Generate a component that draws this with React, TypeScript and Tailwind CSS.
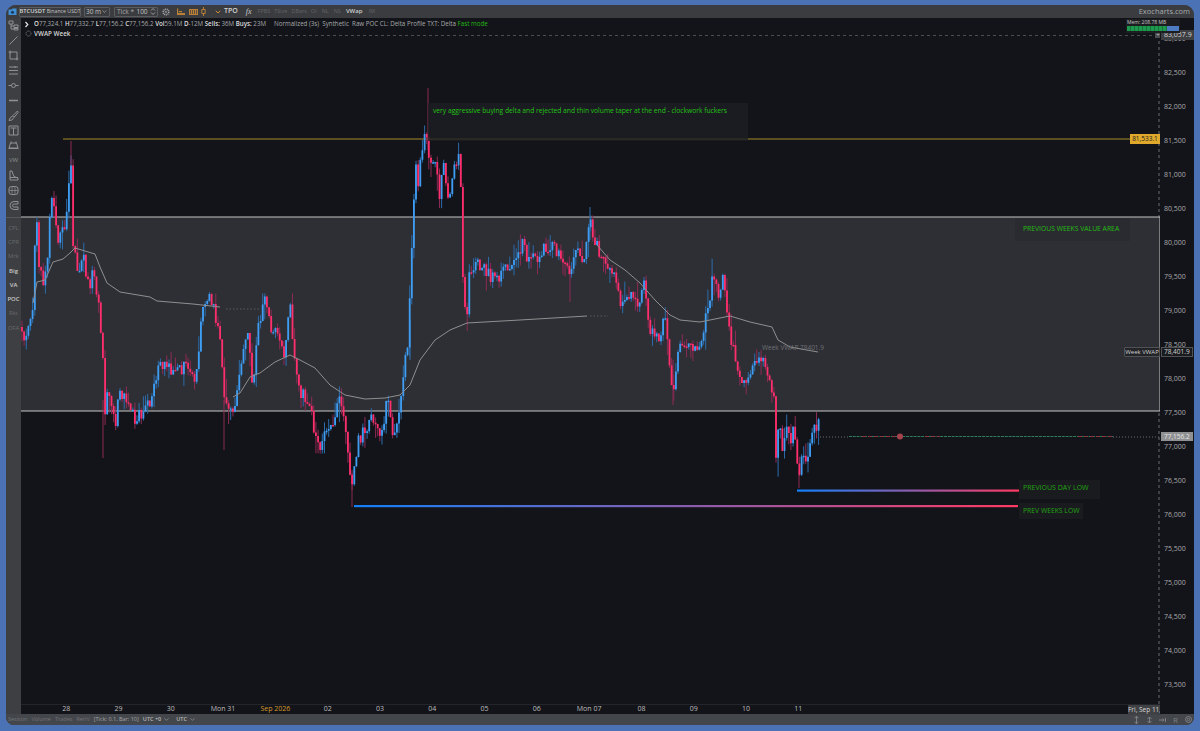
import type { ReactNode } from 'react';
import { ChevronDown } from 'lucide-react';

// price path read off the chart, in page pixels
const PATH: [number, number][] = [
  [21, 327], [24, 340], [28, 333], [33, 303], [36, 212], [39, 262], [43, 290], [47, 270], [50, 207], [53, 200], [58, 243],
  [65, 227], [71, 167], [73, 243], [78, 270], [83, 257], [90, 290], [93, 267], [100, 317], [103, 363], [105, 413], [108, 387],
  [115, 425], [120, 390], [135, 420], [150, 403], [153, 383], [162, 363], [175, 377], [187, 363], [193, 382], [198, 367],
  [200, 327], [208, 292], [217, 320], [222, 357], [224, 403], [232, 417], [240, 373], [247, 330], [253, 390], [258, 330],
  [265, 298], [272, 335], [278, 330], [284, 355], [290, 300], [295, 370], [300, 390], [310, 400], [315, 440], [320, 445],
  [330, 430], [340, 400], [345, 430], [352, 490], [358, 440], [365, 430], [372, 420], [380, 440], [388, 395], [393, 440],
  [400, 400], [408, 337], [413, 213], [417, 155], [418, 183], [425, 125], [430, 167], [435, 160], [440, 197], [443, 160],
  [449, 200], [458, 152], [460, 157], [462, 220], [463, 290], [467, 320], [468, 277], [475, 262], [483, 270], [497, 280],
  [503, 265], [513, 270], [522, 243], [530, 263], [540, 253], [545, 245], [555, 250], [562, 260], [570, 275], [575, 255],
  [585, 255], [590, 222], [600, 255], [605, 260], [612, 270], [620, 300], [628, 290], [635, 305], [645, 285], [650, 330],
  [658, 340], [665, 320], [673, 395], [680, 340], [690, 350], [700, 345], [708, 310], [713, 270], [718, 300], [723, 280],
  [728, 320], [735, 360], [745, 385], [755, 360], [762, 355], [770, 385], [775, 405], [776, 457], [779, 423], [783, 450],
  [786, 428], [790, 443], [793, 432], [798, 463], [799, 480], [803, 453], [808, 463], [810, 438], [815, 430], [818, 420], [820, 436],
];

const VWAP_LINES = [
  'M33 303L37 282L45 280L53 262L63 259L70 253L75 248L85 251L95 254L100 267L107 283L120 292L150 297L157 301L193 304L220 307',
  'M233 397L240 393L250 377L260 373L275 362L290 355L300 360L315 368L330 385L345 395L365 399L385 398L400 395L410 385L420 360L435 340L450 330L467 323L520 320L587 316',
  'M597 245L610 260L625 270L640 283L655 300L670 315L680 320L700 322L730 316L750 322L772 327L778 340L790 347L818 352',
];

// long wicks that noise would not produce: x, top, bottom, up candle or not
const WICKS: [number, number, number, boolean][] = [
  [428, 88, 150, false], [71, 141, 175, false], [103, 458, 400, false], [224, 450, 400, false], [352, 507, 470, false],
  [590, 207, 240, true], [673, 405, 360, false], [570, 302, 270, false], [410, 360, 320, true], [799, 488, 470, false],
];

function rng(seed: number) {
  return () => {
    seed = (seed + 0x6d2b79f5) | 0;
    let t = Math.imul(seed ^ (seed >>> 15), 1 | seed);
    t = (t + Math.imul(t ^ (t >>> 7), 61 | t)) ^ t;
    return ((t ^ (t >>> 14)) >>> 0) / 4294967296;
  };
}

function priceAt(x: number) {
  for (let i = 1; i < PATH.length; i++) {
    if (x <= PATH[i][0]) {
      const [x0, y0] = PATH[i - 1];
      const [x1, y1] = PATH[i];
      return y0 + ((y1 - y0) * (x - x0)) / (x1 - x0);
    }
  }
  return PATH[PATH.length - 1][1];
}

function buildCandles() {
  const rand = rng(11);
  let upBody = '';
  let downBody = '';
  let upWick = '';
  let downWick = '';
  let prev = priceAt(21);
  for (let x = 22; x < 820.5; x += 2.13) {
    const close = priceAt(x) + (rand() - 0.5) * 14;
    const top = Math.min(prev, close);
    const bottom = Math.max(prev, close);
    const up = close < prev;
    const hi = top - rand() * rand() * 20;
    const lo = bottom + rand() * rand() * 20;
    const body = `M${x.toFixed(1)} ${top.toFixed(1)}V${Math.max(bottom, top + 1.5).toFixed(1)}`;
    const wick = `M${x.toFixed(1)} ${hi.toFixed(1)}V${lo.toFixed(1)}`;
    if (up) {
      upBody += body;
      upWick += wick;
    } else {
      downBody += body;
      downWick += wick;
    }
    prev = close;
  }
  for (const [x, a, b, up] of WICKS) {
    if (up) upWick += `M${x} ${a}V${b}`;
    else downWick += `M${x} ${a}V${b}`;
  }
  return { upBody, downBody, upWick, downWick };
}

const candles = buildCandles();

const PRICES = [
  '83,000', '82,500', '82,000', '81,500', '81,000', '80,500', '80,000', '79,500', '79,000', '78,500',
  '78,000', '77,500', '77,000', '76,500', '76,000', '75,500', '75,000', '74,500', '74,000', '73,500',
];
const DAYS = ['28', '29', '30', 'Mon 31', 'Sep 2026', '02', '03', '04', '05', '06', 'Mon 07', '08', '09', '10', '11'];

function ToolIcon({ children }: { children: ReactNode }) {
  return (
    <div className="flex h-[15px] w-full items-center justify-center">
      <svg width="11" height="11" viewBox="0 0 11 11" fill="none" stroke="#8f9194" strokeWidth="1">
        {children}
      </svg>
    </div>
  );
}

function ToolLabel({ text, bright }: { text: string; bright?: boolean }) {
  return (
    <div className={bright ? 'flex h-[14.3px] items-center justify-center text-[6px] font-semibold text-[#c9c9c9]' : 'flex h-[14.3px] items-center justify-center text-[6px] text-[#67696c]'}>
      {text}
    </div>
  );
}

function LeftToolbar() {
  return (
    <div className="flex w-[15px] shrink-0 flex-col bg-[#3d3f42]">
      <ToolIcon><path d="M1 1h4v3H1zM6 5h4v2.500H6zM6 8.500h4V10H6zM3 4v5h3M3 6h3" /></ToolIcon>
      <ToolIcon><path d="M1.500 9.500l8-8" /></ToolIcon>
      <ToolIcon><path d="M2 2h7v7H2z" /><path d="M0.500 2h3M2 0.500v3M7.500 9h3M9 7.500v3" strokeWidth="0.8" /></ToolIcon>
      <ToolIcon><path d="M1 2h9M1 5.500h9M1 9h9" /><path d="M7 1v2" /></ToolIcon>
      <ToolIcon><path d="M0.500 5.500h3M7.500 5.500h3" /><circle cx="5.500" cy="5.500" r="2" /></ToolIcon>
      <ToolIcon><path d="M1 5.500h9" strokeWidth="1.300" /></ToolIcon>
      <ToolIcon><path d="M9.500 1L5 5.500 6.500 7 10 2.500zM4.500 6L2 8l-1 2.500 3-.5 2-2.500z" /></ToolIcon>
      <ToolIcon><path d="M1 1h9v9H1zM2.500 3h6M5.500 3v7" /></ToolIcon>
      <ToolIcon><path d="M2.500 3h6l1.500 5H1zM0.500 8.500h10M3 1.500v2M8 1.500v2" /></ToolIcon>
      <div className="flex h-[15px] items-center justify-center text-[6px] text-[#8f9194]">VW</div>
      <ToolIcon><path d="M2 1v9h8V8L6 6.500 5 4 4 1zM2 7.500h8" /></ToolIcon>
      <ToolIcon><rect x="1" y="1.500" width="9" height="8" rx="2.500" /><path d="M1 5.500h9M4 1.500v8M7 1.500v8" strokeWidth="0.7" /></ToolIcon>
      <ToolIcon><path d="M10 1.500H6a4 4 0 0 0 0 8h4V7H6a1.500 1.500 0 0 1 0-3h4z" /></ToolIcon>
      <div className="mt-[4px] h-px bg-[#55575a]" />
      <div className="flex flex-col pt-[3px]">
        <ToolLabel text="CPL" />
        <ToolLabel text="CPR" />
        <ToolLabel text="Mrk" />
        <ToolLabel text="Big" bright />
        <ToolLabel text="VA" bright />
        <ToolLabel text="POC" bright />
        <ToolLabel text="Rkt" />
        <ToolLabel text="OFA" />
      </div>
    </div>
  );
}

function TopBar() {
  return (
    <div className="flex h-[13px] shrink-0 items-center bg-[#3a3c3f] text-[7px] text-[#c4c4c4]">
      <svg className="ml-[2px] shrink-0" width="9" height="9" viewBox="0 0 9 9">
        <path d="M0.500 2.500h3l1-1h4v6.500h-8z" fill="#3f8fd6" />
        <circle cx="4.500" cy="5.200" r="1.500" fill="#1c3b5c" />
      </svg>
      <div className="ml-[2px] flex h-[10px] w-[62px] items-center justify-center overflow-hidden whitespace-nowrap rounded-[1px] border border-[#5a5c5f] text-[5.800px]">
        <span className="font-semibold text-[#d6d6d6]">BTCUSDT</span>
        <span className="ml-[1.500px] text-[5.200px]">Binance USDT</span>
      </div>
      <div className="ml-[3px] flex h-[10px] w-[26px] items-center justify-between whitespace-nowrap rounded-[1px] border border-[#5a5c5f] px-[1px] text-[6.500px]">
        <span>30 m</span>
        <ChevronDown size={7} />
      </div>
      <div className="ml-[4px] flex h-[10px] w-[44px] items-center justify-between whitespace-nowrap rounded-[1px] border border-[#5a5c5f] pl-[2px] pr-[1px] text-[6.500px]">
        <span className="text-[#a9a9a9]">Tick *</span>
        <span>100</span>
        <svg width="6" height="9" viewBox="0 0 6 9" fill="none" stroke="#b4b4b4" strokeWidth="0.8">
          <path d="M1 3.500L3 1.500 5 3.500M1 5.500L3 7.500 5 5.500" />
        </svg>
      </div>
      <svg className="ml-[4px] shrink-0" width="8" height="8" viewBox="0 0 8 8" fill="none" stroke="#a5a7aa">
        <circle cx="4" cy="4" r="2.800" strokeWidth="1.600" strokeDasharray="1 0.700" />
        <circle cx="4" cy="4" r="0.800" strokeWidth="0.700" />
      </svg>
      <svg className="ml-[6px] shrink-0" width="9" height="8" viewBox="0 0 9 8" fill="#b97f35">
        <path d="M1 0.500h1.200V5H9v2H1zM3 3h3v1.300H3z" />
      </svg>
      <svg className="ml-[4px] shrink-0" width="9" height="6" viewBox="0 0 9 6">
        <path d="M0 0h9v6H0z" fill="#b97f35" />
        <path d="M1.500 1v4M3.500 1v4M5.500 1v4M7.500 1v4" stroke="#3a3c3f" strokeWidth="0.700" />
      </svg>
      <svg className="ml-[3px] shrink-0" width="5" height="9" viewBox="0 0 5 9" fill="none" stroke="#b97f35">
        <path d="M0.800 2.500h3.400v4H0.800zM2.500 0v2.500M2.500 6.500V9" />
      </svg>
      <ChevronDown className="ml-[8px] shrink-0 text-[#d68a2e]" size={8} strokeWidth={3} />
      <span className="ml-[2px] font-semibold text-[#d2d2d2]">TPO</span>
      <span className="ml-[8px] font-['Liberation_Serif',serif] text-[8px] italic text-[#c9c9c9]">fx</span>
      <span className="ml-[6px] text-[5.500px] text-[#626467]">FPBS</span>
      <span className="ml-[4px] text-[5.500px] text-[#626467]">TSize</span>
      <span className="ml-[4px] text-[5.500px] text-[#626467]">DBars</span>
      <span className="ml-[4px] text-[5.500px] text-[#626467]">OI</span>
      <span className="ml-[5px] text-[5.500px] text-[#626467]">NL</span>
      <span className="ml-[5px] text-[5.500px] text-[#626467]">NS</span>
      <span className="ml-[5px] text-[6px] font-semibold text-[#cdcdcd]">VWap</span>
      <span className="ml-[6px] text-[5.500px] text-[#626467]">IM</span>
      <span className="ml-auto mr-[4px] text-[7.500px] text-[#a9abae]">Exocharts.com</span>
    </div>
  );
}

function ChartDrawing() {
  return (
    <svg className="absolute inset-0" width="1139" height="686" viewBox="21 18 1139 686" fill="none">
      <defs>
        <linearGradient id="low-line" x1="0" y1="0" x2="1" y2="0">
          <stop offset="0" stopColor="#1280fa" />
          <stop offset="1" stopColor="#ff3a62" />
        </linearGradient>
      </defs>
      <path d="M75 35.500H1155" stroke="#4b4d50" strokeDasharray="3 3" />
      <path d="M1159 35V704" stroke="#4c4e51" strokeWidth="1.500" strokeDasharray="3 3" />
      <rect x="21" y="217" width="1139" height="194" fill="#2e2f34" />
      <path d="M21 217H1160V411H21" stroke="#c6c6c6" />
      <path d="M63 139H1130" stroke="#a58a2c" />
      <path d="M226 309H260M590 316H608" stroke="#5b5c60" strokeDasharray="1.500 2" />
      <path d={candles.upWick} stroke="#2a6cab" />
      <path d={candles.downWick} stroke="#8c2a55" />
      <path d={candles.upBody} stroke="#3f9ef4" strokeWidth="1.800" />
      <path d={candles.downBody} stroke="#ff2e6c" strokeWidth="1.800" />
      {VWAP_LINES.map((d) => (
        <path key={d} d={d} stroke="#8f8f92" strokeLinejoin="round" />
      ))}
      <rect x="797" y="489.500" width="222" height="2.200" fill="url(#low-line)" />
      <rect x="354" y="505" width="664" height="2.200" fill="url(#low-line)" />
      <path d="M820 437H849M1113 437H1159" stroke="#6a6b6f" strokeDasharray="1 2" />
      <path d="M849 436.500H1113" stroke="#2f7d58" strokeWidth="1.200" strokeDasharray="3 0.800" />
      <path d="M862 436.500H898M925 436.500H940M1078 436.500H1113" stroke="#8e3640" strokeWidth="1.200" strokeDasharray="4 2" />
      <circle cx="900" cy="436.500" r="3" fill="#a5424c" />
    </svg>
  );
}

function ChartOverlays() {
  return (
    <>
      <div className="absolute left-[13px] top-[1px] flex h-[10px] items-center whitespace-pre text-[6.200px] text-[#a6a8ab]">
        <span className="font-semibold text-[#dedede]">O</span>77,324.1{' '}
        <span className="font-semibold text-[#dedede]">H</span>77,332.7{' '}
        <span className="font-semibold text-[#dedede]">L</span>77,156.2{' '}
        <span className="font-semibold text-[#dedede]">C</span>77,156.2{' '}
        <span className="font-semibold text-[#dedede]">Vol</span>59.1M{' '}
        <span className="font-semibold text-[#dedede]">D</span>-12M{' '}
        <span className="font-semibold text-[#dedede]">Sells:</span> 36M{' '}
        <span className="font-semibold text-[#dedede]">Buys:</span> 23M{'     '}
        Normalized (3s){'  '}Synthetic{'  '}Raw POC CL: Delta Profile TXT: Delta{' '}
        <span className="text-[#22b814]">Fast mode</span>
      </div>
      <svg className="absolute left-[3px] top-[2.500px]" width="5" height="7" viewBox="0 0 5 7" fill="none" stroke="#e2e2e2" strokeWidth="1.200">
        <path d="M1.500 1L3.800 3.500 1.500 6" />
      </svg>
      <svg className="absolute left-[4px] top-[12px]" width="7" height="7" viewBox="0 0 7 7" fill="none" stroke="#8a8c8f" strokeWidth="0.800">
        <circle cx="3.500" cy="3.500" r="2.500" strokeDasharray="1 0.600" />
      </svg>
      <div className="absolute left-[13px] top-[11px] text-[6.300px] font-semibold leading-[10px] text-[#d6d6d6]">VWAP Week</div>

      <div className="absolute left-[407px] top-[85px] h-[38px] w-[320px] bg-[#1d1e23]/80 pl-[5px] pt-[3px] text-[6.700px] leading-[10px] text-[#24c414]">
        very aggressive buying delta and rejected and thin volume taper at the end - clockwork fuckers
      </div>
      <div className="absolute left-[994px] top-[200px] h-[23px] w-[115px] bg-[#2a2b30] pl-[8px] pt-[6px] text-[6.800px] leading-[10px] text-[#24bc12]">
        PREVIOUS WEEKS VALUE AREA
      </div>
      <div className="absolute left-[998px] top-[462px] h-[19px] w-[81px] bg-[#1a1b1f] pl-[4px] pt-[3px] text-[7px] leading-[10px] text-[#21a511]">
        PREVIOUS DAY LOW
      </div>
      <div className="absolute left-[998px] top-[485px] h-[16px] w-[64px] bg-[#1a1b1f] pl-[4px] pt-[3px] text-[6.800px] leading-[10px] text-[#21a511]">
        PREV WEEKS LOW
      </div>
      <div className="absolute left-[741px] top-[325px] text-[6.500px] leading-[10px] text-[#6f7074]">Week VWAP 78401.9</div>
      <div className="absolute left-[1109px] top-[116px] h-[10px] w-[30px] bg-[#e0a92c] text-center text-[6.500px] leading-[10px] text-[#1c1c1c]">81,533.1</div>
      <div className="absolute left-[1103px] top-[329px] h-[10px] w-[36px] whitespace-nowrap rounded-[1px] border border-[#505256] bg-[#232428] text-center text-[6px] leading-[8px] text-[#cfcfcf]">Week VWAP</div>
      <div className="absolute left-[1134px] top-[14px] flex h-[6px] w-[6px] items-center justify-center bg-[#4a4c4f] text-[6px] leading-none text-[#c4c4c4]">+</div>
    </>
  );
}

function PriceAxis() {
  return (
    <div className="relative flex w-[34px] shrink-0 flex-col bg-[#131419] pl-[4px] pt-[4px] text-[7px] text-[#a9a9ab]">
      {PRICES.map((price) => (
        <div key={price} className="flex h-[34px] shrink-0 items-center">{price}</div>
      ))}
      <div className="absolute left-[1px] right-0 top-[12px] h-[10px] bg-[#3d3f42] pl-[3px] text-[7px] leading-[10px] text-[#d4d4d4]">83,057.9</div>
      <div className="absolute left-[1px] right-[1px] top-[329px] h-[10px] border border-[#505256] bg-[#1a1b1f] pl-[2px] text-[6.500px] leading-[8px] text-[#d4d4d4]">78,401.9</div>
      <div className="absolute left-[1px] right-[1px] top-[414px] h-[9px] bg-[#8f9092] pl-[3px] text-[6.500px] leading-[9px] text-[#e4e4e4]">77,156.2</div>
    </div>
  );
}

function MemoryMeter() {
  return (
    <div className="absolute right-[14px] top-[1px] h-[14px] w-[54px] bg-[#1d1e21] px-px">
      <div className="text-[5px] leading-[7px] text-[#c9c9c9]">Mem: 208.78 MB</div>
      <div className="flex h-[5px] bg-[#4f7dc4]">
        <div className="w-[40px] bg-[repeating-linear-gradient(90deg,#1d9a4e_0,#1d9a4e_3px,#14743a_3px,#14743a_4px)]" />
      </div>
    </div>
  );
}

function TimeAxis() {
  return (
    <div className="relative flex h-[10px] shrink-0 items-center border-t border-[#24252a] bg-[#131419] pl-[19px] text-[7px] text-[#bdbdbd]">
      {DAYS.map((day) => (
        <div key={day} className={day === 'Sep 2026' ? 'w-[52.300px] shrink-0 text-center text-[#d69a2c]' : 'w-[52.300px] shrink-0 text-center'}>
          {day}
        </div>
      ))}
      <div className="absolute right-[-1px] top-0 h-[10px] w-[33px] whitespace-nowrap bg-[#3f4144] text-center text-[6.500px] leading-[10px] text-[#d8d8d8]">Fri, Sep 11,</div>
    </div>
  );
}

function StatusBar() {
  return (
    <div className="flex h-[11px] shrink-0 items-center whitespace-nowrap bg-[#43464a] pl-[2px] text-[5.500px] text-[#717377]">
      <span>Session</span>
      <span className="ml-[4px]">Volume</span>
      <span className="ml-[4px]">Trades</span>
      <span className="ml-[4px]">RelrV</span>
      <span className="ml-[4px] text-[#a4a6a9]">[Tick: 0.1, Bar: 10]</span>
      <span className="ml-[4px] font-semibold text-[#b9b9b9]">UTC +0</span>
      <ChevronDown className="ml-[2px] text-[#a4a6a9]" size={7} />
      <span className="ml-[6px] font-semibold text-[#b9b9b9]">UTC</span>
      <ChevronDown className="ml-[2px] text-[#a4a6a9]" size={7} />
      <div className="ml-auto mr-[2px] flex items-center gap-[6px]">
        <svg width="7" height="8" viewBox="0 0 7 8" fill="none" stroke="#7d7f82"><path d="M3.500 0v8M1.500 2L3.500 0.500 5.500 2M1.500 6L3.500 7.500 5.500 6" /></svg>
        <svg width="7" height="8" viewBox="0 0 7 8" fill="none" stroke="#7d7f82"><path d="M1.500 3L3.500 1 5.500 3M1.500 5L3.500 7 5.500 5M3.500 1v6" /></svg>
        <svg width="7" height="8" viewBox="0 0 7 8" fill="none" stroke="#7d7f82"><path d="M0 4h5M3.500 2.500L5 4 3.500 5.500M6.500 2v4" /></svg>
        <span className="w-[7px] text-center text-[8px] leading-none text-[#7d7f82]">R</span>
        <svg width="7" height="7" viewBox="0 0 7 7" fill="none" stroke="#7d7f82"><circle cx="3.500" cy="3.500" r="3" /><circle cx="3.500" cy="3.500" r="1.200" /></svg>
      </div>
    </div>
  );
}

export default function App() {
  return (
    <div className="h-[731px] w-[1200px] overflow-hidden bg-[#4a72b5] pb-[6px] pl-[6px] pr-[6px] pt-[5px] font-['Open_Sans',sans-serif]">
      <div className="flex h-[720px] flex-col overflow-hidden rounded-b-[8px] rounded-t-[10px] bg-[#3a3c3f]">
        <TopBar />
        <div className="relative flex min-h-0 flex-1">
          <LeftToolbar />
          <div className="flex min-w-0 flex-1 flex-col">
            <div className="relative h-[686px] shrink-0 bg-[#131419]">
              <ChartDrawing />
              <ChartOverlays />
            </div>
            <TimeAxis />
          </div>
          <PriceAxis />
          <MemoryMeter />
        </div>
        <StatusBar />
      </div>
    </div>
  );
}
